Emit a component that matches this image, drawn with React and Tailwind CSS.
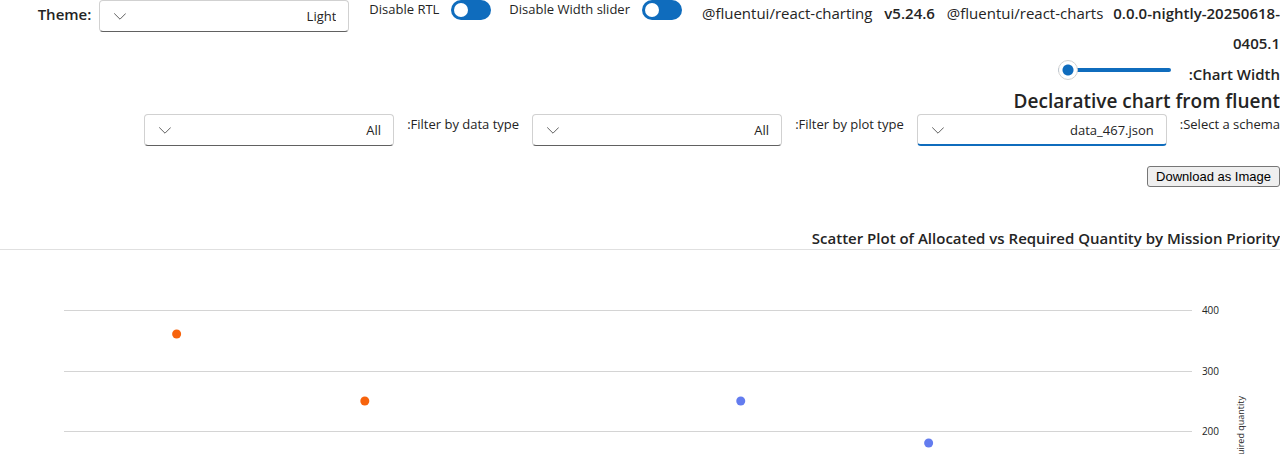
import React from "react";

const gridLines = [
  { value: 400, y: 60 },
  { value: 300, y: 121 },
  { value: 200, y: 181 },
];

const points = [
  { x: "13.8%", y: 84, color: "#f7630c" },
  { x: "28.5%", y: 151, color: "#f7630c" },
  { x: "57.87%", y: 151, color: "#637cef" },
  { x: "72.55%", y: 193, color: "#637cef" },
];

function Dropdown({ id, options, focused }) {
  return (
    <div className="relative w-[250px] shrink-0">
      <select
        id={id}
        dir="rtl"
        className={
          "block h-8 w-full appearance-none rounded border border-[#d1d1d1] bg-white px-3 pt-0.5 text-[13px] text-[#242424] outline-none " +
          (focused ? "border-b-2 border-b-[#0f6cbd]" : "border-b-[#616161]")
        }
      >
        {options.map((option) => (
          <option key={option}>{option}</option>
        ))}
      </select>
      <svg
        className="pointer-events-none absolute left-[15px] top-[10px] h-3 w-3"
        viewBox="0 0 12 12"
        fill="none"
        stroke="#616161"
        aria-hidden="true"
      >
        <path d="M0.5 3.7 L6 9.2 L11.5 3.7" strokeLinecap="round" strokeLinejoin="round" />
      </svg>
    </div>
  );
}

function Toggle({ label }) {
  return (
    <label className="flex h-5 shrink-0 items-center gap-3 whitespace-nowrap text-[13px]">
      {label}
      <input
        type="checkbox"
        role="switch"
        className="h-5 w-10 appearance-none rounded-full bg-[#0f6cbd] before:ml-[3px] before:mt-[3px] before:block before:h-[14px] before:w-[14px] before:rounded-full before:bg-white checked:before:ml-[23px]"
      />
    </label>
  );
}

function Field({ id, label, options, focused }) {
  return (
    <div className="flex items-start gap-[13px]">
      <label htmlFor={id} className="whitespace-nowrap text-[13px] leading-5">
        {label}
      </label>
      <Dropdown id={id} options={options} focused={focused} />
    </div>
  );
}

function ScatterChart() {
  return (
    <svg className="block h-[204px] w-full overflow-hidden" role="img" aria-label="Scatter plot">
      {gridLines.map(({ value, y }) => (
        <g key={value}>
          <rect x="5%" y={y} width="88.125%" height="1" fill="#d4d4d4" />
          <text x="93.9%" y={y + 4} fontSize="10" fill="#242424">
            {value}
          </text>
        </g>
      ))}
      {points.map((point) => (
        <circle key={point.x} cx={point.x} cy={point.y} r="4.5" fill={point.color} />
      ))}
      <svg x="97.2%" y="146" overflow="visible">
        <text transform="rotate(-90)" textAnchor="end" fontSize="9" fill="#242424">
          Required quantity
        </text>
      </svg>
    </svg>
  );
}

export default function App() {
  return (
    <main className="overflow-hidden bg-white font-['Open_Sans','Noto_Sans',sans-serif] text-[#242424]">
      <header className="flex items-start justify-end">
        <div className="flex items-start gap-2">
          <label htmlFor="theme" className="text-[15px] font-semibold leading-7">
            Theme:
          </label>
          <Dropdown id="theme" options={["Light", "Dark"]} />
        </div>
        <div className="ml-5 flex gap-[18px]">
          <Toggle label="Disable RTL" />
          <Toggle label="Disable Width slider" />
        </div>
        <div className="ml-5 whitespace-nowrap text-right text-[15px] leading-[30px]">
          <p className="-mt-0.5">
            @fluentui/react-charting <strong className="mx-2 font-semibold">v5.24.6</strong>{" "}
            @fluentui/react-charts <strong className="ml-1.5 font-semibold">0.0.0-nightly-20250618-</strong>
            <br />
            <strong className="font-semibold">0405.1</strong>
          </p>
        </div>
      </header>

      <div dir="rtl" className="flex h-8 items-start gap-[18px]">
        <label htmlFor="chart-width" className="text-[15px] font-semibold leading-8">
          Chart Width:
        </label>
        <input
          id="chart-width"
          dir="ltr"
          type="range"
          min="0"
          max="100"
          defaultValue="0"
          className="mt-0.5 h-5 w-[113px] appearance-none bg-transparent [&::-webkit-slider-runnable-track]:h-1 [&::-webkit-slider-runnable-track]:rounded-full [&::-webkit-slider-runnable-track]:bg-[#0f6cbd] [&::-webkit-slider-thumb]:-mt-2 [&::-webkit-slider-thumb]:h-5 [&::-webkit-slider-thumb]:w-5 [&::-webkit-slider-thumb]:appearance-none [&::-webkit-slider-thumb]:rounded-full [&::-webkit-slider-thumb]:border [&::-webkit-slider-thumb]:border-[#d1d1d1] [&::-webkit-slider-thumb]:bg-[radial-gradient(circle,#0f6cbd_0_5px,#ffffff_6px)]"
        />
      </div>

      <h1 className="text-right text-[19px] font-semibold leading-[22px]">Declarative chart from fluent</h1>

      <div dir="rtl" className="mt-[2px] flex items-start gap-[13px]">
        <Field id="schema" label="Select a schema:" options={["data_467.json"]} focused />
        <Field id="plot-type" label="Filter by plot type:" options={["All"]} />
        <Field id="data-type" label="Filter by data type:" options={["All"]} />
      </div>

      <div className="mt-5 flex justify-end">
        <button
          type="button"
          className="h-[21px] rounded-[3px] border border-[#767676] bg-[#efefef] px-2 font-['Liberation_Sans',Arial,sans-serif] text-[13px] leading-[19px] text-black"
        >
          Download as Image
        </button>
      </div>

      <section className="mt-10">
        <h2 className="border-b border-[#e0e0e0] text-right text-[15px] font-semibold leading-[22px]">
          Scatter Plot of Allocated vs Required Quantity by Mission Priority
        </h2>
        <ScatterChart />
      </section>
    </main>
  );
}
